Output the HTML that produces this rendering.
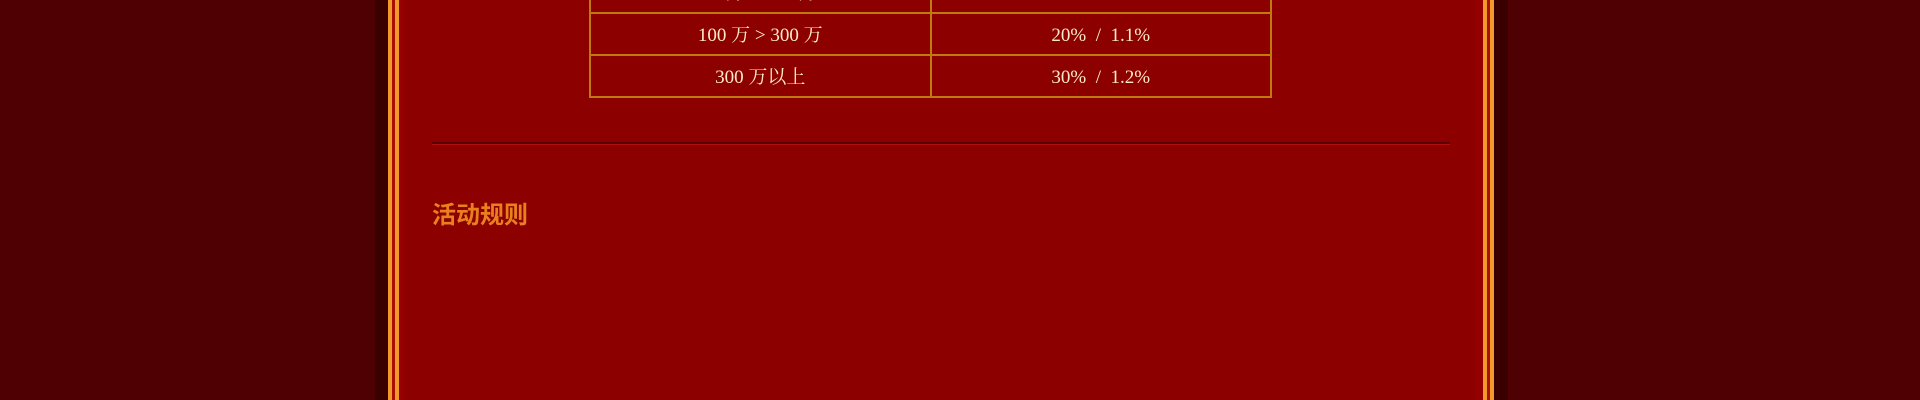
<!DOCTYPE html>
<html><head><meta charset="utf-8"><style>
*{margin:0;padding:0;box-sizing:border-box}
body{width:1920px;height:400px;overflow:hidden;background:#4e0003;position:relative;font-family:"Liberation Serif","Noto Serif CJK SC",serif}
.sl{position:absolute;top:0;height:400px}
table{position:absolute;left:589px;top:-30px;border-collapse:collapse;width:683px}
td{border:2px solid #c07a10;height:42px;text-align:center;color:#fdebc8;font-size:19px;width:50%;line-height:20px;padding-top:4px}
h2{position:absolute;left:432px;top:195px;font-family:"Liberation Sans","Noto Sans CJK SC",sans-serif;font-size:24px;font-weight:bold;color:#e8801e}
</style></head><body>
<div class="sl" style="left:375px;width:13px;background:#3a0000"></div>
<div class="sl" style="left:388px;width:1095px;background:#8c0000"></div>
<div class="sl" style="left:388px;width:4px;background:#f39a2a"></div>
<div class="sl" style="left:392px;width:3px;background:#a81000"></div>
<div class="sl" style="left:395px;width:4px;background:#f39a2a"></div>
<div class="sl" style="left:399px;width:6px;background:#950000"></div>
<div class="sl" style="left:1483px;width:4px;background:#f39a2a"></div>
<div class="sl" style="left:1487px;width:3px;background:#a81000"></div>
<div class="sl" style="left:1490px;width:4px;background:#f39a2a"></div>
<div class="sl" style="left:1494px;width:14px;background:#3a0000"></div>
<div class="sl" style="left:1475px;width:8px;background:#950000"></div>
<table>
<tr><td>50 万 &gt; 100 万</td><td>10% &nbsp;/&nbsp; 1.0%</td></tr>
<tr><td>100 万 &gt; 300 万</td><td>20% &nbsp;/&nbsp; 1.1%</td></tr>
<tr><td>300 万以上</td><td>30% &nbsp;/&nbsp; 1.2%</td></tr>
</table>
<div style="position:absolute;left:432px;top:142px;width:1018px;height:2px;background:#5a0000"></div>
<div style="position:absolute;left:432px;top:144px;width:1018px;height:1px;background:#b01010"></div>
<h2>活动规则</h2>
</body></html>
